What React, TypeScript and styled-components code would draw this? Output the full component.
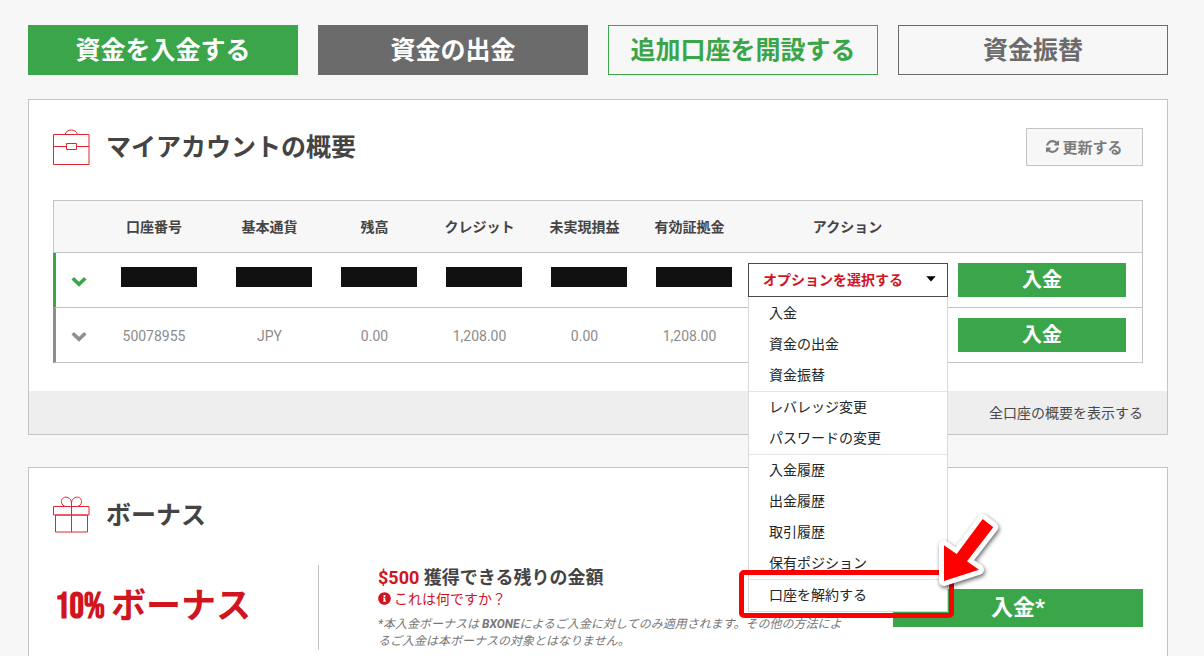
import React from "react";
import styled, { createGlobalStyle, css } from "styled-components";
import { FaInfoCircle } from "react-icons/fa";

const green = "#3ba549";
const red = "#d0151f";
const grey = "#6b6b6b";
const line = "#c3c5c5";

const GlobalStyle = createGlobalStyle`
  *, *::before, *::after { box-sizing: border-box; }
  html { scrollbar-width: none; }
  body {
    margin: 0;
    background: #f7f7f7;
    color: #444;
    font: 14px/20px Roboto, "Noto Sans CJK JP", sans-serif;
  }
  button { font-family: inherit; cursor: pointer; }
  a { color: inherit; text-decoration: none; }
`;

const Page = styled.main`
  padding: 25px 36px 32px 28px;
`;

const QuickActions = styled.nav`
  display: grid;
  grid-template-columns: repeat(4, 1fr);
  gap: 20px;
  margin-bottom: 24px;
`;

const QuickLink = styled.a<{ $tone: string; $filled?: boolean }>`
  display: flex;
  align-items: center;
  justify-content: center;
  height: 50px;
  padding-top: 2px;
  border: 1px solid ${(p) => p.$tone};
  background: ${(p) => (p.$filled ? p.$tone : "transparent")};
  color: ${(p) => (p.$filled ? "#fff" : p.$tone)};
  font-size: 25px;
  font-weight: 700;
`;

const Panel = styled.section`
  border: 1px solid ${line};
  background: #fff;
  margin-bottom: 32px;
`;

const PanelBody = styled.div`
  padding: 28px 24px;
`;

const PanelHead = styled.header<{ $space: number }>`
  display: flex;
  align-items: center;
  gap: 16px;
  margin-bottom: ${(p) => p.$space}px;
`;

const PanelTitle = styled.h2`
  margin: 0;
  flex: 1;
  padding-top: 2px;
  font-size: 25px;
  line-height: 34px;
  font-weight: 700;
`;

const LineIcon = styled.svg`
  width: 37px;
  height: 37px;
  fill: none;
  stroke: #dc2832;
`;

const RefreshButton = styled.button`
  display: flex;
  align-items: center;
  justify-content: center;
  gap: 3px;
  width: 117px;
  height: 38px;
  padding: 0 0 2px;
  border: 1px solid ${line};
  background: #f7f7f7;
  color: #7b7b7b;
  font-size: 15px;
  font-weight: 700;
`;

const AccountTable = styled.table`
  width: 100%;
  table-layout: fixed;
  border-collapse: separate;
  border-spacing: 0;
  text-align: center;
`;

const Col = styled.col<{ $width?: number }>`
  ${(p) => p.$width && css`width: ${p.$width}px;`}
`;

const HeadCell = styled.th`
  height: 53px;
  padding: 0;
  border: solid ${line};
  border-width: 1px 0;
  background: #f7f7f7;
  font-weight: 700;
  &:first-child { border-left-width: 1px; }
  &:last-child { border-right-width: 1px; }
`;

const Cell = styled.td`
  height: 55px;
  padding: 2px 0 0;
  border-bottom: 1px solid ${line};
  color: #8c8c8c;
  &:last-child { border-right: 1px solid ${line}; }
`;

const ToggleCell = styled(Cell)<{ $tone: string }>`
  border-left: 3px solid ${(p) => p.$tone};
  color: ${(p) => p.$tone};
`;

const ToggleButton = styled.button`
  display: flex;
  margin-left: 15px;
  padding: 0;
  border: 0;
  background: none;
  color: inherit;
`;

const RedactedCell = styled(Cell)`
  padding: 0 0 6px 9px;
`;

const Redaction = styled.span`
  display: block;
  width: 76px;
  height: 20px;
  margin: 0 auto;
  background: #111;
`;

const ActionCell = styled(Cell)`
  padding: 0 5px 0 6px;
`;

const DepositCell = styled(Cell)`
  padding: 0 16px 0 5px;
`;

const DepositButton = styled.button`
  display: block;
  width: 100%;
  height: 34px;
  padding: 0;
  border: 0;
  background: ${green};
  color: #fff;
  font-size: 20px;
  line-height: 34px;
  font-weight: 700;
`;

const Dropdown = styled.div`
  position: relative;
`;

const DropdownToggle = styled.button`
  display: flex;
  align-items: center;
  justify-content: space-between;
  width: 100%;
  height: 34px;
  padding: 0 11px 2px 14px;
  border: 1px solid #4a4a4a;
  background: #fff;
  color: ${red};
  font-size: 14px;
  font-weight: 700;
`;

const Menu = styled.div`
  position: absolute;
  z-index: 2;
  top: 100%;
  left: 0;
  right: 0;
  padding-top: 1px;
  border: 1px solid #d9d9d9;
  border-top: 0;
  background: #fff;
  text-align: left;
`;

const MenuGroup = styled.div`
  & + & { border-top: 1px solid #e6e6e6; }
`;

const MenuItem = styled.a`
  display: block;
  position: relative;
  padding: 0 20px;
  line-height: 31px;
  color: #222629;
`;

const Highlight = styled.span`
  position: absolute;
  inset: -10px -7px -7px -10px;
  border: 5px solid #f00;
  border-radius: 5px;
  pointer-events: none;
`;

const Arrow = styled.svg`
  position: absolute;
  left: 185px;
  bottom: 20px;
  width: 70px;
  height: 80px;
  pointer-events: none;
  filter: drop-shadow(1px 2px 2px rgba(0, 0, 0, 0.6));
`;

const PanelFoot = styled.footer`
  display: flex;
  align-items: center;
  justify-content: flex-end;
  height: 43px;
  padding: 0 24px;
  background: #eee;
  color: #4a4a4a;
`;

const BonusRow = styled.div`
  display: flex;
  align-items: center;
`;

const BonusName = styled.div`
  display: flex;
  align-items: baseline;
  gap: 6px;
  width: 266px;
  height: 85px;
  padding-left: 2px;
  border-right: 1px solid ${line};
  color: ${red};
  font-size: 35px;
  line-height: 83px;
  font-weight: 700;
  white-space: nowrap;
`;

const BonusRate = styled.span`
  font-family: "Bebas Neue", Oswald, "Noto Sans ExtraCondensed", "Noto Sans", sans-serif;
  font-size: 36px;
`;

const BonusInfo = styled.div`
  flex: 1;
  padding: 0 45px 0 59px;
`;

const BonusAmount = styled.h3`
  margin: 0;
  font-size: 18px;
  line-height: 24px;
  font-weight: 700;
`;

const Sum = styled.span`
  color: ${red};
`;

const InfoLink = styled.a`
  display: flex;
  align-items: center;
  gap: 3px;
  line-height: 18px;
  color: ${red};
`;

const Note = styled.p`
  margin: 8px 0 0;
  color: #777;
  font-size: 12px;
  line-height: 17px;
  font-style: italic;
`;

const BonusDeposit = styled(DepositButton)`
  width: 250px;
  height: 38px;
  font-size: 22px;
  line-height: 38px;
`;

const RefreshIcon = () => (
  <svg width="13" height="13" viewBox="0 0 1536 1536" fill="currentColor" aria-hidden="true">
    <path d="M1511 928q0 5-1 7-64 268-268 434.500t-478 166.500q-146 0-282.500-55t-243.500-157l-129 129q-19 19-45 19t-45-19-19-45v-448q0-26 19-45t45-19h448q26 0 45 19t19 45-19 45l-137 137q71 66 161 102t187 36q134 0 250-65t186-179q11-17 53-117 8-23 30-23h192q13 0 22.500 9.500t9.500 22.500zm25-800v448q0 26-19 45t-45 19h-448q-26 0-45-19t-19-45 19-45l138-138q-148-137-349-137-134 0-250 65t-186 179q-11 17-53 117-8 23-30 23h-199q-13 0-22.500-9.500t-9.500-22.500v-7q65-268 270-434.500t480-166.500q146 0 284 55.500t245 156.500l130-129q19-19 45-19t45 19 19 45z" />
  </svg>
);

const Chevron = () => (
  <svg width="16" height="11" viewBox="0 0 16 11" fill="none" stroke="currentColor" strokeWidth="3.600" aria-hidden="true">
    <path d="M1.700 2.200 8 8.200 14.300 2.200" />
  </svg>
);

const Caret = () => (
  <svg width="10" height="6" viewBox="0 0 10 6" aria-hidden="true">
    <path d="M.3.300H9.700L5 5.400Z" fill="#000" />
  </svg>
);

const menuGroups = [
  ["入金", "資金の出金", "資金振替"],
  ["レバレッジ変更", "パスワードの変更"],
  ["入金履歴", "出金履歴", "取引履歴", "保有ポジション"],
];

const columns = ["口座番号", "基本通貨", "残高", "クレジット", "未実現損益", "有効証拠金", "アクション"];
const account = ["50078955", "JPY", "0.00", "1,208.00", "0.00", "1,208.00"];

export default function App() {
  return (
    <>
      <GlobalStyle />
      <Page>
        <QuickActions>
          <QuickLink href="#deposit" $tone={green} $filled>資金を入金する</QuickLink>
          <QuickLink href="#withdraw" $tone={grey} $filled>資金の出金</QuickLink>
          <QuickLink href="#open" $tone={green}>追加口座を開設する</QuickLink>
          <QuickLink href="#transfer" $tone={grey}>資金振替</QuickLink>
        </QuickActions>

        <Panel>
          <PanelBody>
            <PanelHead $space={34}>
              <LineIcon viewBox="0 0 37 37" aria-hidden="true">
                <path d="M.5 5.500H36V35.500H.5ZM12 5.500C13.500-.5 23-.5 24.500 5.500M.5 17.500H13.500M23.500 17.500H36M13.500 14.500H23.500V20.500H13.500Z" />
              </LineIcon>
              <PanelTitle>マイアカウントの概要</PanelTitle>
              <RefreshButton type="button"><RefreshIcon />更新する</RefreshButton>
            </PanelHead>

            <AccountTable>
              <colgroup>
                <Col $width={38} />
                <Col $width={126} />
                <Col /><Col /><Col /><Col /><Col />
                <Col $width={211} />
                <Col $width={190} />
              </colgroup>
              <thead>
                <tr>
                  <HeadCell />
                  {columns.map((name) => <HeadCell key={name} scope="col">{name}</HeadCell>)}
                  <HeadCell />
                </tr>
              </thead>
              <tbody>
                <tr>
                  <ToggleCell $tone={green}>
                    <ToggleButton type="button" aria-label="詳細"><Chevron /></ToggleButton>
                  </ToggleCell>
                  {account.map((_, i) => <RedactedCell key={i}><Redaction /></RedactedCell>)}
                  <ActionCell>
                    <Dropdown>
                      <DropdownToggle type="button" aria-haspopup="menu" aria-expanded="true">
                        オプションを選択する<Caret />
                      </DropdownToggle>
                      <Menu role="menu">
                        {menuGroups.map((group) => (
                          <MenuGroup key={group[0]}>
                            {group.map((item) => <MenuItem key={item} role="menuitem" href="#menu">{item}</MenuItem>)}
                          </MenuGroup>
                        ))}
                        <MenuGroup>
                          <MenuItem role="menuitem" href="#close">
                            口座を解約する
                            <Highlight />
                            <Arrow viewBox="934 511 70 80" aria-hidden="true">
                              <path
                                d="M944 581V545.300L956.700 554 982.700 519 993.300 527.300 967 561.300 979 569.700Z"
                                fill="#f00"
                                stroke="#fff"
                                strokeWidth="10"
                                strokeLinejoin="round"
                                paintOrder="stroke"
                              />
                            </Arrow>
                          </MenuItem>
                        </MenuGroup>
                      </Menu>
                    </Dropdown>
                  </ActionCell>
                  <DepositCell><DepositButton type="button">入金</DepositButton></DepositCell>
                </tr>
                <tr>
                  <ToggleCell $tone="#8e8e8e">
                    <ToggleButton type="button" aria-label="詳細"><Chevron /></ToggleButton>
                  </ToggleCell>
                  {account.map((value, i) => <Cell key={i}>{value}</Cell>)}
                  <ActionCell />
                  <DepositCell><DepositButton type="button">入金</DepositButton></DepositCell>
                </tr>
              </tbody>
            </AccountTable>
          </PanelBody>
          <PanelFoot><a href="#all">全口座の概要を表示する</a></PanelFoot>
        </Panel>

        <Panel>
          <PanelBody>
            <PanelHead $space={32}>
              <LineIcon viewBox="0 0 37 37" aria-hidden="true">
                <path d="M.5 10.500H36V19H.5ZM2.500 19H34.500V36H2.500ZM18.500 5V36" />
                <path d="M18.500 6.500C17.500-.5 8.500-.5 8.500 5.500 8.500 8.500 10.500 10.500 13.500 10.500M18.500 6.500C19.500-.5 28.500-.5 28.500 5.500 28.500 8.500 26.500 10.500 23.500 10.500" />
              </LineIcon>
              <PanelTitle>ボーナス</PanelTitle>
            </PanelHead>
            <BonusRow>
              <BonusName><BonusRate>10%</BonusRate>ボーナス</BonusName>
              <BonusInfo>
                <BonusAmount><Sum>$500</Sum> 獲得できる残りの金額</BonusAmount>
                <InfoLink href="#info"><FaInfoCircle size={13} aria-hidden="true" />これは何ですか？</InfoLink>
                <Note>
                  *本入金ボーナスは <b>BXONE</b>によるご入金に対してのみ適用されます。その他の方法によるご入金は本ボーナスの対象とはなりません。
                </Note>
              </BonusInfo>
              <BonusDeposit type="button">入金*</BonusDeposit>
            </BonusRow>
          </PanelBody>
        </Panel>
      </Page>
    </>
  );
}
